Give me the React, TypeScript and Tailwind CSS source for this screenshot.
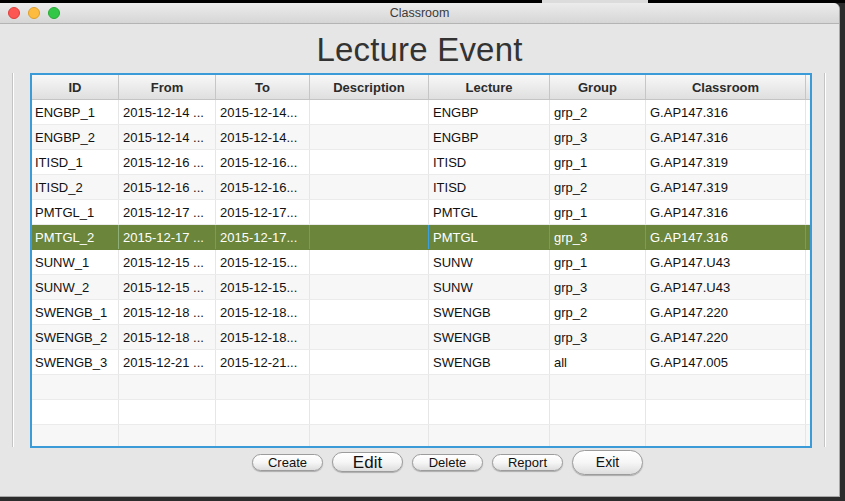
import React from "react";

const cols = [
	{ key: "id", title: "ID", w: "w-[87px]" },
	{ key: "from", title: "From", w: "w-[97px]" },
	{ key: "to", title: "To", w: "w-[94px]" },
	{ key: "desc", title: "Description", w: "w-[119px]" },
	{ key: "lecture", title: "Lecture", w: "w-[121px]" },
	{ key: "group", title: "Group", w: "w-[96px]" },
	{ key: "room", title: "Classroom", w: "w-[160px]" },
];

const rows = [
	["ENGBP_1", "2015-12-14 ...", "2015-12-14...", "", "ENGBP", "grp_2", "G.AP147.316"],
	["ENGBP_2", "2015-12-14 ...", "2015-12-14...", "", "ENGBP", "grp_3", "G.AP147.316"],
	["ITISD_1", "2015-12-16 ...", "2015-12-16...", "", "ITISD", "grp_1", "G.AP147.319"],
	["ITISD_2", "2015-12-16 ...", "2015-12-16...", "", "ITISD", "grp_2", "G.AP147.319"],
	["PMTGL_1", "2015-12-17 ...", "2015-12-17...", "", "PMTGL", "grp_1", "G.AP147.316"],
	["PMTGL_2", "2015-12-17 ...", "2015-12-17...", "", "PMTGL", "grp_3", "G.AP147.316"],
	["SUNW_1", "2015-12-15 ...", "2015-12-15...", "", "SUNW", "grp_1", "G.AP147.U43"],
	["SUNW_2", "2015-12-15 ...", "2015-12-15...", "", "SUNW", "grp_3", "G.AP147.U43"],
	["SWENGB_1", "2015-12-18 ...", "2015-12-18...", "", "SWENGB", "grp_2", "G.AP147.220"],
	["SWENGB_2", "2015-12-18 ...", "2015-12-18...", "", "SWENGB", "grp_3", "G.AP147.220"],
	["SWENGB_3", "2015-12-21 ...", "2015-12-21...", "", "SWENGB", "all", "G.AP147.005"],
	["", "", "", "", "", "", ""],
	["", "", "", "", "", "", ""],
	["", "", "", "", "", "", ""],
];

const SELECTED = 5;

function Button({ label, big }: { label: string; big?: "edit" | "exit" }) {
	const size =
		big === "edit"
			? "h-[20px] text-[17px]"
			: big === "exit"
				? "h-[25px] text-[14px]"
				: "h-[17px] text-[13px]";
	return (
		<button
			className={`${size} w-[71px] rounded-full border border-[#9c9c9c] bg-gradient-to-b from-white via-[#f6f6f6] to-[#dedede] text-[#111] leading-none shadow-[0_1px_1px_rgba(0,0,0,0.25)] flex items-center justify-center`}
		>
			{label}
		</button>
	);
}

export default function App() {
	return (
		<div
			className="w-[845px] h-[501px] bg-[#2c2c2c] overflow-hidden flex flex-col"
			style={{ fontFamily: '"Liberation Sans", Arial, sans-serif' }}
		>
			<div className="h-[3px] flex shrink-0">
				<div className="w-[542px] bg-black" />
				<div className="w-[106px] bg-[#dcdcdc]" />
				<div className="flex-1 bg-black" />
			</div>
			<div className="w-[840px] h-[494px] bg-[#e6e6e6] rounded-tr-[6px] flex flex-col border-r border-b border-[#a8a8a8]">
				{/* title bar */}
				<div className="h-[21px] shrink-0 rounded-tr-[6px] bg-gradient-to-b from-[#ececec] to-[#d6d6d6] border-b border-[#b4b4b4] flex items-center relative">
					<div className="flex gap-[8px] pl-[8px]">
						<span className="w-[12px] h-[12px] rounded-full bg-[#fc5753] border border-[#df3f3a]" />
						<span className="w-[12px] h-[12px] rounded-full bg-[#fdbc40] border border-[#de9f2a]" />
						<span className="w-[12px] h-[12px] rounded-full bg-[#33c748] border border-[#27aa35]" />
					</div>
					<span className="absolute left-0 right-0 text-center text-[12.5px] text-[#3b3b3b]">
						Classroom
					</span>
				</div>

				{/* heading */}
				<div className="h-[49px] shrink-0 flex items-center justify-center pt-[2px]">
					<h1 className="text-[33px] text-[#333] leading-none tracking-[0.2px]">Lecture Event</h1>
				</div>

				{/* table area */}
				<div className="flex pl-[12px] h-[375px] shrink-0">
					<div className="w-[2px] h-[374px] border-l border-[#c4c4c4] bg-white" />
					<div className="ml-[16px] w-[782px] h-[375px] border-2 border-[#3a9bd8] bg-white flex flex-col overflow-hidden">
						<div className="h-[25px] shrink-0 flex border-b border-[#c4c4c4]">
							{cols.map((c) => (
								<div
									key={c.key}
									className={`${c.w} shrink-0 bg-gradient-to-b from-[#f8f8f8] to-[#dfdfdf] border-r border-[#c6c6c6] flex items-center justify-center pt-[2px] text-[13px] font-bold text-[#2b2b2b]`}
								>
									{c.title}
								</div>
							))}
							<div className="flex-1 bg-gradient-to-b from-[#f8f8f8] to-[#dfdfdf]" />
						</div>
						{rows.map((r, i) => {
							const sel = i === SELECTED;
							const bg = sel ? "bg-[#6b853b]" : i % 2 === 0 ? "bg-white" : "bg-[#f7f7f7]";
							return (
								<div key={i} className={`h-[25px] shrink-0 flex ${bg} border-b ${sel ? "border-[#6b853b]" : "border-[#ebebeb]"}`}>
									{r.map((v, j) => (
										<div
											key={j}
											className={`${cols[j].w} shrink-0 border-r ${sel ? (j === 0 ? "border-[#8fb07a]" : "border-[#3aa2e0]") : "border-[#e6e6e6]"} flex items-center ${j === 0 ? "pl-[3px]" : "pl-[4px]"} pt-[1px] text-[13px] ${sel ? "text-white" : "text-[#111]"} whitespace-nowrap overflow-hidden`}
										>
											{v}
										</div>
									))}
									<div className="flex-1" />
								</div>
							);
						})}
					</div>
					<div className="ml-[12px] w-[2px] h-[374px] border-l border-[#c4c4c4] bg-white" />
				</div>

				{/* buttons */}
				<div className="flex items-center gap-[9px] pl-[252px] h-[28px] shrink-0">
					<Button label="Create" />
					<Button label="Edit" big="edit" />
					<Button label="Delete" />
					<Button label="Report" />
					<Button label="Exit" big="exit" />
				</div>
			</div>
		</div>
	);
}
